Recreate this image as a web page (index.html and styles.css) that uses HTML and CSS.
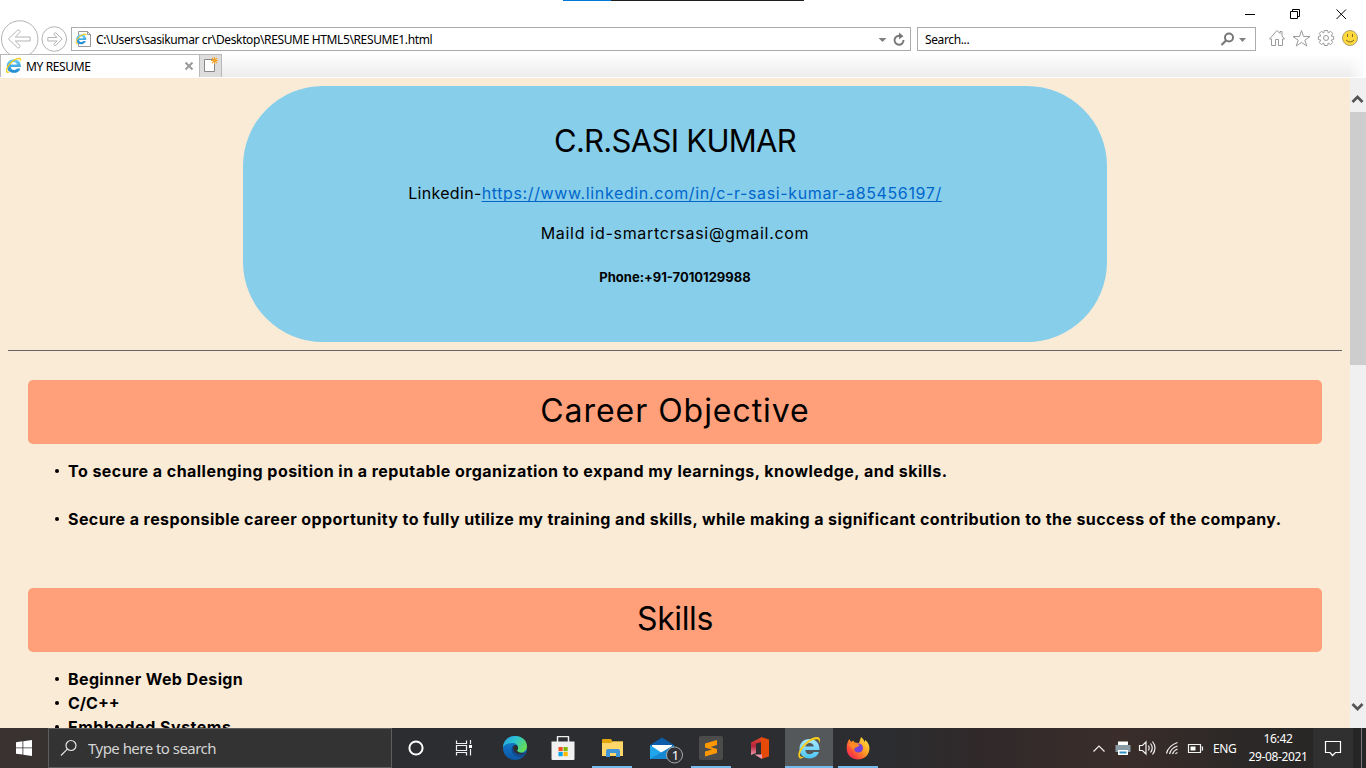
FILE: index.html
```html
<!DOCTYPE html>
<html lang="en">
<head>
<meta charset="utf-8">
<title>MY RESUME</title>
<link rel="stylesheet" href="styles.css">
</head>
<body>
<svg class="defs" width="0" height="0">
  <defs>
    <linearGradient id="ieBlue" x1="0" y1="0" x2="0" y2="1"><stop offset="0" stop-color="#6fd0f7"/><stop offset="1" stop-color="#1c86cf"/></linearGradient>
    <linearGradient id="ieSky" x1="0" y1="0" x2="0" y2="1"><stop offset="0" stop-color="#a8e9ff"/><stop offset="1" stop-color="#4cc6f6"/></linearGradient>
    <linearGradient id="edgeTop" x1="0" y1="0" x2="1" y2=".5"><stop offset="0" stop-color="#279ee0"/><stop offset=".5" stop-color="#2bc3d2"/><stop offset="1" stop-color="#63dc5a"/></linearGradient>
    <linearGradient id="edgeBase" x1="0" y1="0" x2="0" y2="1"><stop offset="0" stop-color="#1684d8"/><stop offset="1" stop-color="#0c56a4"/></linearGradient>
    <linearGradient id="fox" x1="1" y1="0" x2="0" y2="1"><stop offset="0" stop-color="#fff04a"/><stop offset=".45" stop-color="#ff9a22"/><stop offset=".75" stop-color="#ff433d"/><stop offset="1" stop-color="#e61f77"/></linearGradient>
    <linearGradient id="office" x1="0" y1="0" x2="0" y2="1"><stop offset="0" stop-color="#f04a28"/><stop offset=".5" stop-color="#b5243c"/><stop offset="1" stop-color="#ee98a8"/></linearGradient>
    <path id="ieE" d="M22.500 14H8.300c.2 2.800 1.900 4.200 4.400 4.200 1.900 0 3.200-.7 4-2.100h5.200c-1.400 4-4.800 6.300-9.500 6.300-6 0-9.900-3.800-9.900-9.600C2.500 7 6.700 3 12.500 3c6.300 0 10.200 4.200 10 11zM8.400 10.500h8.400C16.500 8.200 15 7 12.600 7c-2.300 0-3.800 1.200-4.200 3.500z"/>
    <path id="ieRing" d="M3 22.500C-1 19.800 2.500 11.500 9 6.200 14.800 1.300 21.800-.5 22.800 2.700c.5 1.500 0 3-.8 4.700.3-2.100.1-3.400-1.300-3.900-2.700-1-7.600 1.400-11.600 5.200C4.200 13.500 1.300 19.400 4 20.700c1 .5 2.500.2 4.200-.6-2.100 1.800-3.900 3-5.200 2.400z" fill="#f7cc1b"/>
    <symbol id="ie" viewBox="0 0 24 24"><use href="#ieE" fill="url(#ieBlue)"/><use href="#ieRing"/></symbol>
  </defs>
</svg>
<div class="screen">
  <header class="chrome">
    <div class="titlebar">
      <div class="handle"><span class="handle-blue"></span></div>
      <svg class="window-buttons" width="122" height="28" viewBox="0 0 122 28" fill="none" stroke="#000">
        <path d="M1 14.500h10M46.500 11.500h7v7h-7zM48.500 11.500v-2h7v7h-2M92.500 9.500l9.500 9.500M102 9.500L92.500 19"/>
      </svg>
    </div>
    <div class="address-row">
      <svg class="nav" width="72" height="26" viewBox="0 0 72 26" fill="none" stroke="#b2b2b2">
        <circle cx="20" cy="12" r="18.500"/>
        <path d="M8.500 12l9-8.700q1-1 2.200 0t.3 2.300L15.500 10h15v4h-15l4.500 4.400q1 1.100-.2 2.200t-2.300 0z"/>
        <circle cx="55" cy="12" r="12.500"/>
        <path d="M63 12l-6.200-6q-.8-.7-1.600 0t-.3 1.600l3 2.900H48.500v3.500h9.400l-3 2.900q-.7.800.1 1.500t1.800-.1z"/>
      </svg>
      <div class="field address">
        <svg class="page-icon" width="18" height="18" viewBox="0 0 18 18"><path d="M3.500 1.500h9l3 3v12h-12zM12.500 1.500v3h3" fill="#fff" stroke="#999"/><use href="#ie" x="0" y="3" width="12" height="12"/></svg>
        <span class="ui url">C:\Users\sasikumar cr\Desktop\RESUME HTML5\RESUME1.html</span>
        <svg class="end" width="32" height="22" viewBox="0 0 32 22"><path d="M1.500 10h8l-4 4z" fill="#808080"/><path d="M23.500 8a4.500 4.500 0 1 0 3 4" fill="none" stroke="#777" stroke-width="1.900"/><path d="M22 4.500l4.500 3.700-4.500 3z" fill="#777"/></svg>
      </div>
      <div class="field search">
        <span class="ui">Search...</span>
        <svg class="end" width="29" height="22" viewBox="0 0 29 22"><circle cx="9" cy="9.500" r="4" fill="none" stroke="#777" stroke-width="2"/><path d="M6 12.500L1.500 17" stroke="#777" stroke-width="2.200"/><path d="M19 10h7l-3.500 4z" fill="#808080"/></svg>
      </div>
      <svg class="tools" width="98" height="24" viewBox="1268 26 98 24" fill="none" stroke="#9a9a9a">
        <path d="M1269.500 39l7.500-8.500 3 3v-2h2v4.500l2.500 3h-2v6.500h-4v-6h-3v6h-4V39z"/>
        <path d="M1301.500 30.500l2 6h6.500l-5.200 3.700 2 5.800-5.300-3.600-5.300 3.600 2-5.800-5.200-3.700h6.500z"/>
        <path d="M1324.300 30.500h3.400l.5 2.400 2.500-1.500 2 2-1.500 2.600 2.500.5v3l-2.500.6 1.500 2.400-2 2-2.500-1.500-.5 2.500h-3.400l-.5-2.500-2.500 1.500-2-2 1.500-2.400-2.500-.6v-3l2.500-.5-1.500-2.600 2-2 2.500 1.500z"/><circle cx="1326" cy="38" r="2.500"/>
        <circle cx="1350" cy="38" r="7.500" fill="#ffd93b" stroke="#aaa07a"/><path d="M1347.500 34v3M1352.500 34v3M1346 40q4 4 8 0" stroke="#826b27"/>
      </svg>
    </div>
    <div class="tabs">
      <div class="tab">
        <svg width="18" height="18"><use href="#ie" width="17" height="17"/></svg>
        <span class="ui tab-title">MY RESUME</span>
        <svg class="tab-close" width="10" height="10" viewBox="0 0 10 10"><path d="M1.500 1.500l7 7m0-7l-7 7" stroke="#999" stroke-width="1.900"/></svg>
      </div>
      <div class="newtab"><svg width="16" height="18" viewBox="0 0 16 18"><path d="M1.500 3.500h10v12h-10z" fill="#fff" stroke="#888"/><path d="M11.500 1v7M8 4.500h7M9 2l5 5m0-5L9 7" stroke="#f1a52b" stroke-width="1.100"/></svg></div>
    </div>
  </header>

  <div class="viewport">
    <main class="page">
      <section class="intro">
        <h1><span class="t-name">C.R.SASI KUMAR</span></h1>
        <p class="linkedin"><span class="t-in">Linkedin-</span><a class="t-link">https://www.linkedin.com/in/c-r-sasi-kumar-a85456197/</a></p>
        <p class="mail"><span class="t-mail">Maild id-smartcrsasi@gmail.com</span></p>
        <h5><span class="t-phone">Phone:+91-7010129988</span></h5>
      </section>
      <div class="rule"></div>
      <section class="block">
        <h2><span class="t-career">Career Objective</span></h2>
        <ul class="spaced">
          <li><span class="t-one">To secure a challenging position in a reputable organization to expand my learnings, knowledge, and skills.</span></li>
          <li><span class="t-two">Secure a responsible career opportunity to fully utilize my training and skills, while making a significant contribution to the success of the company.</span></li>
        </ul>
      </section>
      <section class="block skills">
        <h2><span class="t-skills">Skills</span></h2>
        <ul>
          <li><span class="t-web">Beginner Web Design</span></li>
          <li><span class="t-c">C/C++</span></li>
          <li><span class="t-emb">Embbeded Systems</span></li>
        </ul>
      </section>
    </main>
    <div class="scrollbar">
      <svg width="17" height="34" viewBox="0 0 17 34"><path d="M3.500 24l5-5 5 5" fill="none" stroke="#555" stroke-width="2.700"/></svg>
      <div class="thumb"></div>
      <svg class="down" width="17" height="34" viewBox="0 0 17 34"><path d="M3.500 10l5 5 5-5" fill="none" stroke="#555" stroke-width="2.700"/></svg>
    </div>
  </div>

  <footer class="taskbar">
    <div class="start"><svg width="16" height="16" viewBox="0 0 16 16" fill="#fff"><path d="M0 2.200L6.500 1.300v6.200H0zM7.300 1.200L16 0v7.500H7.300zM0 8.300h6.500v6.200L0 13.700zM7.300 8.300H16V16l-8.700-1.200z"/></svg></div>
    <div class="task-search">
      <svg width="18" height="18" viewBox="0 0 18 18" fill="none" stroke="#e4e4e4" stroke-width="1.200"><circle cx="11" cy="6.500" r="5"/><path d="M7.300 10.200L1 16.500"/></svg>
      <span class="ui hint">Type here to search</span>
    </div>
    <div class="apps">
      <div class="app"><svg viewBox="0 0 24 24"><circle cx="12" cy="12" r="6.600" fill="none" stroke="#fff" stroke-width="2"/></svg></div>
      <div class="app"><svg viewBox="0 0 24 24" fill="none" stroke="#f0f0f0" stroke-width="1.200"><path d="M3.500 4.500v3h10v-3M3.500 9.500h10v5h-10zM3.500 19.500v-3h10v3M17.500 4v4M17.500 13v6.500"/><path d="M16 9h3v3h-3z" fill="#fff" stroke="none"/></svg></div>
      <div class="app edge"><svg viewBox="0 0 24 24"><circle cx="12" cy="12" r="12" fill="url(#edgeBase)"/><path d="M0 11C.5 4.500 5.500 0 12 0c7 0 12 4.700 12 10.200 0 4-2.800 6.300-6.300 6.300-3 0-4.200-1.200-3.500-2.500C16.300 10.500 14 7 9.500 7 5 7 1.500 8.500 0 11z" fill="url(#edgeTop)"/><path d="M9.500 10.200c-3 6 2 11.500 8.500 10.700 1.800-.2 3.500-1.300 4.600-2.700.4-.5 0-1-.7-.6-5.600 2.700-10.300-.4-7.700-3.900.7-1.300.8-3-.5-4-1.500-1.100-3.300-.8-4.200.5z" fill="#134a8e"/><path d="M14 14.500c2-2 1-5-1-5.500-1.300-.3-2.300.5-2.600 1.700-.5 2.300.3 5.300 4.100 7 3.500 1.500 6.500.8 9-1.700-2.500 1.800-7.500 1.600-9.500-1.500z" fill="#2c2e30"/></svg></div>
      <div class="app"><svg viewBox="0 0 24 24"><path d="M6.500 8V1q0-.5.500-.5h10q.5 0 .5.500v7" fill="none" stroke="#eee" stroke-width="1.500"/><path d="M.5 5.500h23V23q0 1-1 1h-21q-1 0-1-1z" fill="#f1f1f1"/><path d="M7.500 11h4.200v4.200H7.500z" fill="#f25022"/><path d="M12.500 11h4.200v4.200h-4.200z" fill="#7fba00"/><path d="M7.500 16h4.200v4.200H7.500z" fill="#00a4ef"/><path d="M12.500 16h4.200v4.200h-4.200z" fill="#ffb900"/></svg></div>
      <div class="app open folder"><svg viewBox="0 0 24 24"><path d="M1 4q0-1 1-1h8l1.500 2.500H22V10H1z" fill="#e5a50e"/><path d="M1 7h9l2-1.500h10V20H1z" fill="#ffd768"/><path d="M5 21v-6q0-2 2-2h10q2 0 2 2v6h-4v-4H9v4z" fill="#3f95da"/></svg></div>
      <div class="app"><svg class="mail-icon" viewBox="0 0 34 24"><path d="M0 9L12 1.500 24 9v5H0z" fill="#0d5ca7"/><path d="M2 9h20v6L12 18 2 15z" fill="#fff"/><path d="M0 9l12 8L24 9v14H0z" fill="#20a4ea"/><path d="M0 23L24 9v14z" fill="#1687d2"/><circle cx="24.500" cy="19" r="8" fill="#303236" stroke="#aaa"/></svg><span class="ui badge">1</span></div>
      <div class="app open"><svg viewBox="0 0 24 24"><rect width="24" height="24" rx="2" fill="#4b4b4b"/><path d="M6 7.500L18 4v5l-6.500 2L18 13v4L6 20.500v-5l7-2-7-2z" fill="#ff9800"/></svg></div>
      <div class="app"><svg viewBox="0 0 24 24"><path d="M3 6.500L14 1v5L8 7.500V17l-5 2z" fill="url(#office)"/><path d="M13 1l8 2.500v17L13 23z" fill="#e64a08"/><path d="M6.500 18.500H14V23z" fill="#f096aa"/></svg></div>
      <div class="app open current"><svg viewBox="0 0 24 24"><use href="#ieE" fill="url(#ieSky)"/><use href="#ieRing"/></svg></div>
      <div class="app open"><svg viewBox="0 0 24 24"><path d="M2 5.500L3.200 3l2 3 2-1.500 1.500 2L13 7l2-6c2 1.500 3 3 3.300 5l1.200-2C22.500 7 24 10 23.300 14 22.500 20 17.500 23.500 12 23.500S1.500 20 .8 14C.5 11 .8 8 2 5.500z" fill="url(#fox)"/><circle cx="12.500" cy="12" r="4.500" fill="#7542d9"/><path d="M3 8.500c2-2 6-2.500 8.500-.5l2.500 1.500c-2 .2-2 1.500-4 2-1 .3-2 .7-2 2.500-2-1-3-3-5-5.500z" fill="#ff8a25"/></svg></div>
    </div>
    <div class="tray">
      <svg width="116" height="24" viewBox="1092 736 116 24" fill="none" stroke="#f1f1f1" stroke-width="1.200">
        <path d="M1093.500 751.500l5.500-5.500 5.500 5.500"/>
        <path d="M1118 741.500h10v4h-10z" fill="#fff" stroke="none"/><path d="M1115.500 745h15v7h-15z" fill="#8b9ba6" stroke="none"/><path d="M1118 750h10v5h-10z" fill="#fff" stroke="none"/><path d="M1119.500 751.500h7v2h-7z" fill="#2f91c4" stroke="none"/>
        <path d="M1139.500 745.500h3l3.500-3.500v12l-3.500-3.500h-3zM1148.500 745.500q1.500 2.500 0 5M1150.500 743.500q3.500 4.500 0 9M1152.500 741.500q5 6.500 0 13"/>
        <path d="M1166.500 753.500q2-8 11-11M1169.500 754q1.500-6 8-8M1172.500 754q1-3.500 5-5M1175.500 754q.5-1 2-1.500"/>
        <path d="M1188.500 744.500h12v8h-12zM1201.500 747h1v3h-1"/><path d="M1190.500 746.500h5v4h-5z" fill="#fff" stroke="none"/>
      </svg>
      <span class="ui lang">ENG</span>
      <div class="ui clock"><span class="time">16:42</span><span class="date">29-08-2021</span></div>
      <div class="notify"><svg width="18" height="18" viewBox="0 0 18 18" fill="none" stroke="#fff" stroke-width="1.200"><path d="M1.500 2.500h15v11h-5L8.500 16.500 6 13.500H1.500z"/></svg></div>
      <div class="peek"></div>
    </div>
  </footer>
</div>
</body>
</html>
```
FILE: styles.css
```css
* { box-sizing: border-box; }
body { margin: 0; font-family: Inter, "Open Sans", sans-serif; color: #000; }
h1, h2, h5, p, ul { margin: 0; padding: 0; }
svg { display: block; flex: none; }
span, a { white-space: nowrap; }
.defs { position: absolute; }
.screen { width: 1366px; height: 768px; overflow: hidden; display: flex; flex-direction: column; }
.ui { font-family: "Noto Sans", "Open Sans", sans-serif; font-size: 12px; letter-spacing: -.37px; }

.chrome { height: 78px; background: #fff; border-bottom: 1px solid #fff; flex: none; }
.titlebar { height: 27px; display: flex; justify-content: flex-end; }
.handle { width: 241px; height: 1px; background: #1f1f1f; margin-right: 440px; display: flex; }
.handle-blue { width: 48px; background: #0078d7; }
.address-row { height: 27px; display: flex; align-items: flex-start; }
.nav { width: 71px; overflow: visible; }
.field { height: 24px; border: 1px solid #ababab; display: flex; align-items: center; background: #fff; }
.address { width: 840px; padding: 0 1px 0 3px; }
.page-icon { margin-right: 3px; }
.end { margin-left: auto; }
.search { width: 339px; margin-left: 6px; padding: 0 6px 0 7px; }
.tools { margin-left: 12px; margin-top: -1px; }
.tabs { height: 23px; display: flex; position: relative; background: linear-gradient(#fff, #ececec); }
.tabs::after { content: ""; margin-left: auto; width: 18px; background: linear-gradient(90deg, transparent, #fff); }
.tab { width: 200px; background: #fff; border: 1px solid #b8b8b8; border-bottom: 0; display: flex; align-items: center; padding: 0 6px 0 4px; }
.tab-title { margin-left: 3px; }
.tab-close { margin-left: auto; margin-right: -1px; }
.newtab { width: 22px; background: #ddd; border: 1px solid #b8b8b8; border-left: 0; border-bottom: 0; padding: 1px 0 0 3px; }

.viewport { height: 650px; display: flex; background: #faebd7; overflow: hidden; flex: none; }
.page { width: 1350px; padding: 8px 8px 0; flex: none; }
.intro { width: 864px; height: 256px; margin: 0 auto; background: #87ceeb; border-radius: 80px; text-align: center; padding-top: 31px; }
h1, h2 { font-weight: 400; font-size: 32px; line-height: 48px; text-align: center; }
h1 { font-size: 31px; }
.linkedin { margin-top: 16px; line-height: 24px; }
.mail { margin-top: 16px; line-height: 24px; }
h5 { margin-top: 22px; font-size: 13px; line-height: 20px; }
.linkedin a { color: #0066cc; text-decoration: underline; text-underline-offset: 2px; text-decoration-thickness: 1px; text-decoration-skip-ink: none; }
.rule { height: 1px; background: #666; margin-top: 8px; }
.block { margin: 29px 20px 0 20px; }
.block h2 { height: 64px; background: #ffa07a; border-radius: 5px; padding-top: 7px; }
.block ul { list-style: none; padding: 15px 0 0 27px; font-weight: 700; font-size: 16px; line-height: 24px; }
.block li { display: flex; align-items: center; height: 24px; }
.block li::before { content: ""; width: 4px; height: 4px; border-radius: 2px; background: #000; margin-right: 9px; flex: none; }
.spaced li + li { margin-top: 24px; }
.block.skills { margin-top: 57px; }
.t-name { letter-spacing: -.7px; }
.t-in { letter-spacing: .32px; }
.t-link { letter-spacing: .63px; }
.t-mail { letter-spacing: .7px; }
.t-career { letter-spacing: .95px; }
.t-skills { letter-spacing: -.4px; }
.t-one { letter-spacing: .45px; }
.t-two { letter-spacing: .41px; }
.t-web { letter-spacing: .38px; }
.t-emb { letter-spacing: .5px; }

.scrollbar { width: 16px; background: #f0f0f0; display: flex; flex-direction: column; }
.scrollbar svg { margin-left: -1px; }
.thumb { height: 253px; background: #cdcdcd; }
.scrollbar .down { margin-top: auto; }

.taskbar { height: 40px; background: linear-gradient(90deg, #393230 0, #2b2d30 390px, #2b2d30 880px, #30292a 980px, #3a2d2a 1120px, #2b2827 1250px, #252525); display: flex; color: #fff; flex: none; }
.start { width: 48px; display: flex; align-items: center; justify-content: center; }
.task-search { width: 344px; background: #333; border: 1px solid #5e5e5e; display: flex; align-items: center; padding-left: 11px; }
.hint { font-size: 15px; color: #d5d5d5; margin-left: 10px; letter-spacing: -.53px; }
.apps { display: flex; }
.app { width: 48px; margin-right: 1.100px; display: flex; align-items: center; justify-content: center; position: relative; }
.app svg { width: 24px; height: 24px; }
.app.edge svg, .app.folder svg { margin-left: 2px; }
.app .mail-icon { width: 34px; margin-left: 11px; overflow: visible; }
.badge { position: absolute; left: 34px; top: 18px; width: 8px; text-align: center; font-size: 13px; line-height: 18px; left: 33px; letter-spacing: 0; }
.mail-icon + .badge { left: 34px; }
.open::after { content: ""; position: absolute; left: 4px; right: 4px; bottom: 0; height: 2px; background: #76b9ed; }
.current { background: #55585b; }
.current::after { left: 0; right: 0; }
.tray { margin-left: auto; display: flex; align-items: center; }
.lang { margin-left: 5px; width: 24px; }
.clock { width: 76px; display: flex; flex-direction: column; align-items: center; line-height: 18px; margin-left: 3px; }
.notify { width: 40px; height: 40px; background: #303030; display: flex; align-items: center; justify-content: center; margin-left: -3px; }
.peek { width: 13px; height: 40px; background: linear-gradient(90deg, transparent 8px, #777 8px, #777 9px, transparent 9px); }
```
